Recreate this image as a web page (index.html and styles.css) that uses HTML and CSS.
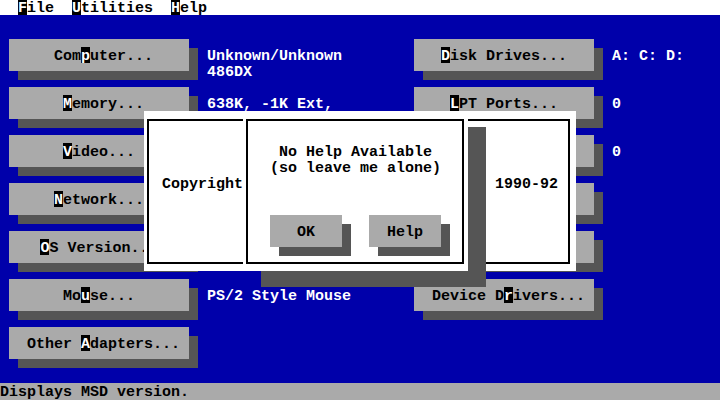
FILE: index.html
```html
<!DOCTYPE html>
<html>
<head>
<meta charset="utf-8">
<title>Microsoft Diagnostics</title>
<link rel="stylesheet" href="styles.css">
</head>
<body>
<div class="screen">
  <div class="menubar">
    <span class="menu"><span class="hk">F</span>ile</span>
    <span class="menu"><span class="hk">U</span>tilities</span>
    <span class="menu"><span class="hk">H</span>elp</span>
  </div>
  <div class="main">
    <div class="col left">
      <div class="row"><div class="btn odd">Com<span class="hk">p</span>uter...</div><div class="val">Unknown/Unknown<br>486DX</div></div>
      <div class="row"><div class="btn odd"><span class="hk">M</span>emory...</div><div class="val">638K, -1K Ext,</div></div>
      <div class="row"><div class="btn"><span class="hk">V</span>ideo...</div><div class="val"></div></div>
      <div class="row"><div class="btn"><span class="hk">N</span>etwork...</div><div class="val"></div></div>
      <div class="row"><div class="btn"><span class="hk">O</span>S Version...</div><div class="val"></div></div>
      <div class="row"><div class="btn">Mo<span class="hk">u</span>se...</div><div class="val">PS/2 Style Mouse</div></div>
      <div class="row"><div class="btn odd">Other <span class="hk">A</span>dapters...</div><div class="val"></div></div>
    </div>
    <div class="col right">
      <div class="row"><div class="btn"><span class="hk">D</span>isk Drives...</div><div class="val">A: C: D:</div></div>
      <div class="row"><div class="btn"><span class="hk">L</span>PT Ports...</div><div class="val">0</div></div>
      <div class="row"><div class="btn"><span class="hk">C</span>OM Ports...</div><div class="val">0</div></div>
      <div class="row"><div class="btn"><span class="hk">I</span>RQ Status...</div><div class="val"></div></div>
      <div class="row"><div class="btn"><span class="hk">T</span>SR Programs...</div><div class="val"></div></div>
      <div class="row"><div class="btn odd">Device D<span class="hk">r</span>ivers...</div><div class="val"></div></div>
    </div>
  </div>
  <div class="status">Displays MSD version.</div>

  <div class="about">
    <div class="frame about-frame">
      <div class="copyline"><span>Copyright</span><span>1990-92</span></div>
    </div>
    <div class="msgbox">
      <div class="frame msg-frame">
        <div class="msg">No Help Available</div>
        <div class="msg">(so leave me alone)</div>
        <div class="msg-buttons">
          <div class="btn small">OK</div>
          <div class="btn small">Help</div>
        </div>
      </div>
    </div>
  </div>
</div>
</body>
</html>
```

FILE: styles.css
```css
html, body {
  margin: 0;
  padding: 0;
  background: #0000aa;
}

.screen {
  position: relative;
  width: 720px;
  height: 400px;
  overflow: hidden;
  background: #0000aa;
  font-family: "Liberation Mono", "DejaVu Sans Mono", monospace;
  font-size: 15px;
  font-weight: bold;
  line-height: 16px;
}

/* highlighted hot-key cell: the glyph sits 2px below the cell top */
.hk {
  display: inline-block;
  box-sizing: border-box;
  width: 9px;
  height: 16px;
  margin-top: -2px;
  padding-top: 2px;
  background: #000;
  color: #fff;
  vertical-align: top;
  line-height: 16px;
}

.menubar {
  display: flex;
  gap: 18px;
  box-sizing: border-box;
  height: 15px;
  padding: 1px 0 0 18px;
  background: #fff;
  color: #000;
}

.menubar .hk {
  height: 15px;
  margin-top: -1px;
  padding-top: 1px;
}

.main {
  display: flex;
  height: 368px;
  box-sizing: border-box;
  padding: 24px 0 0 9px;
}

.col {
  display: flex;
  flex-direction: column;
}

.col.left {
  width: 405px;
}

.row {
  display: flex;
  align-items: flex-start;
  height: 48px;
  flex: none;
}

.btn {
  flex: none;
  box-sizing: border-box;
  width: 180px;
  height: 32px;
  padding-top: 10px;
  background: #aaaaaa;
  color: #000;
  text-align: center;
  white-space: nowrap;
  box-shadow: 9px 9px 0 #555555;
}

.btn.odd {
  padding-left: 9px;
}

.val {
  margin-left: 18px;
  padding-top: 10px;
  color: #fff;
  white-space: nowrap;
}

.status {
  box-sizing: border-box;
  height: 17px;
  padding-top: 2px;
  background: #aaaaaa;
  color: #000;
}

/* About dialog (overlay) */
.about {
  position: absolute;
  left: 144px;
  top: 111px;
  width: 432px;
  height: 160px;
  box-sizing: border-box;
  padding: 8px 6px 7px 3px;
  background: #fff;
  color: #000;
}

.frame {
  box-sizing: border-box;
  height: 100%;
  border: 2px solid #000;
}

.copyline {
  display: flex;
  justify-content: space-between;
  padding: 56px 10px 0 13px;
}

/* Message box over the about dialog */
.msgbox {
  position: absolute;
  left: 99px;
  top: 0;
  width: 225px;
  height: 160px;
  box-sizing: border-box;
  padding: 8px 4px 7px 3px;
  background: #fff;
  box-shadow: 18px 16px 0 #555555;
}

.msg-frame {
  display: flex;
  flex-direction: column;
  align-items: center;
  padding: 24px 0 0 1px;
}

.msg {
  white-space: nowrap;
}

.msg-buttons {
  display: flex;
  gap: 27px;
  margin-top: 38px;
}

.btn.small {
  width: 72px;
}
```
